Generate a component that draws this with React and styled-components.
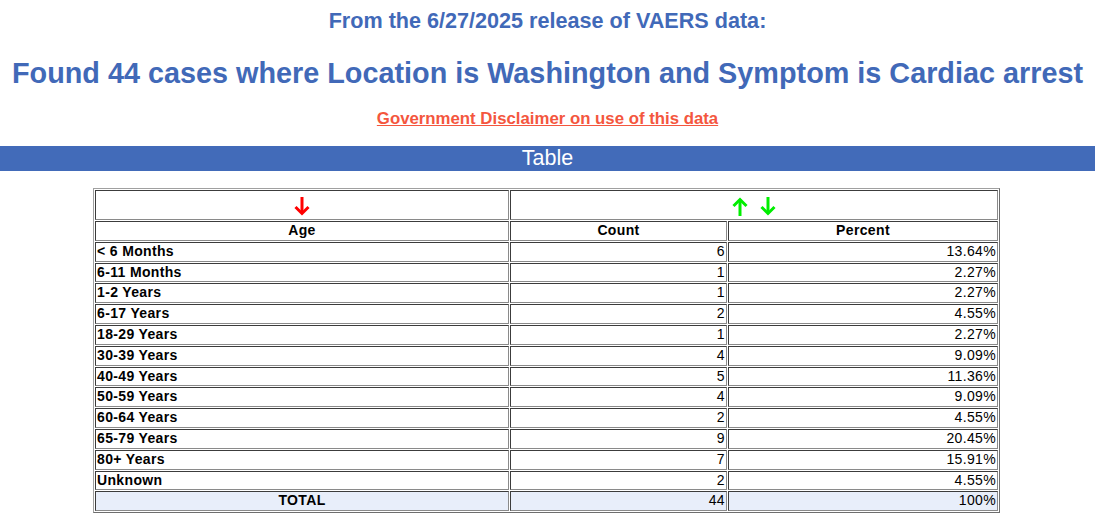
import React from 'react';
import styled, { createGlobalStyle } from 'styled-components';

const GlobalStyle = createGlobalStyle`
  body {
    margin: 0;
    background: #fff;
    font-family: "Liberation Sans", Arial, sans-serif;
  }
`;

const Page = styled.div`
  display: flex;
  flex-direction: column;
  align-items: center;
`;

const Release = styled.h3`
  margin: 8px 0 0;
  font-size: 21.6px;
  line-height: 25px;
  font-weight: bold;
  color: #4169b8;
`;

const Headline = styled.h1`
  margin: 24px 0 0;
  font-size: 28.8px;
  line-height: 32px;
  font-weight: bold;
  color: #4169b8;
`;

const Disclaimer = styled.a`
  margin-top: 20px;
  font-size: 16.8px;
  line-height: 20px;
  font-weight: bold;
  color: #f4563e;
  text-decoration: underline;
`;

const Bar = styled.div`
  align-self: stretch;
  margin-top: 17px;
  height: 25px;
  background: #426bb9;
  color: #fff;
  font-size: 21.5px;
  line-height: 25px;
  text-align: center;
`;

const Table = styled.table`
  margin-top: 17px;
  margin-right: 2px;
  width: 907px;
  border-collapse: separate;
  border-spacing: 1px;
  border: 1px solid;
  border-color: #a0a0a0 #6e6e6e #6e6e6e #a0a0a0;
  font-size: 14px;
  letter-spacing: 0.35px;
  color: #000;
`;

const Cell = styled.td`
  padding: 1px 1px;
  line-height: 15.8px;
  border: 1px solid;
  border-color: #3c3c3c #8a8a8a #8a8a8a #3c3c3c;
  text-align: ${p => p.$align || 'left'};
  font-weight: ${p => (p.$bold ? 'bold' : 'normal')};
  background: ${p => (p.$total ? '#e8eefa' : '#fff')};
  height: ${p => (p.$tall ? '26px' : 'auto')};
  vertical-align: middle;
`;

const Arrows = styled.span`
  display: inline-flex;
  gap: 12px;
  vertical-align: middle;
  padding-top: 2px;
`;

const Arrow = ({ color, up }) => (
  <svg width="16" height="19" viewBox="0 0 16 19" style={{ display: 'block' }}>
    <g
      transform={up ? 'rotate(180 8 9.5)' : undefined}
      stroke={color}
      strokeWidth="3"
      fill="none"
      strokeLinejoin="miter"
    >
      <line x1="8" y1="0" x2="8" y2="16" />
      <polyline points="1.5,10 8,16.5 14.5,10" />
    </g>
  </svg>
);

const rows = [
  ['< 6 Months', 6, '13.64%'],
  ['6-11 Months', 1, '2.27%'],
  ['1-2 Years', 1, '2.27%'],
  ['6-17 Years', 2, '4.55%'],
  ['18-29 Years', 1, '2.27%'],
  ['30-39 Years', 4, '9.09%'],
  ['40-49 Years', 5, '11.36%'],
  ['50-59 Years', 4, '9.09%'],
  ['60-64 Years', 2, '4.55%'],
  ['65-79 Years', 9, '20.45%'],
  ['80+ Years', 7, '15.91%'],
  ['Unknown', 2, '4.55%'],
];

export default function App() {
  return (
    <Page>
      <GlobalStyle />
      <Release>From the 6/27/2025 release of VAERS data:</Release>
      <Headline>Found 44 cases where Location is Washington and Symptom is Cardiac arrest</Headline>
      <Disclaimer href="#">Government Disclaimer on use of this data</Disclaimer>
      <Bar>Table</Bar>
      <Table>
        <tbody>
          <tr>
            <Cell $align="center" $tall style={{ width: '410px' }}>
              <Arrows><Arrow color="#ff0000" /></Arrows>
            </Cell>
            <Cell $align="center" $tall colSpan={2}>
              <Arrows>
                <Arrow color="#00ee00" up />
                <Arrow color="#00ee00" />
              </Arrows>
            </Cell>
          </tr>
          <tr>
            <Cell $align="center" $bold>Age</Cell>
            <Cell $align="center" $bold style={{ width: '213px' }}>Count</Cell>
            <Cell $align="center" $bold>Percent</Cell>
          </tr>
          {rows.map(([age, count, pct]) => (
            <tr key={age}>
              <Cell $bold>{age}</Cell>
              <Cell $align="right">{count}</Cell>
              <Cell $align="right">{pct}</Cell>
            </tr>
          ))}
          <tr>
            <Cell $align="center" $bold $total>TOTAL</Cell>
            <Cell $align="right" $total>44</Cell>
            <Cell $align="right" $total>100%</Cell>
          </tr>
        </tbody>
      </Table>
    </Page>
  );
}
